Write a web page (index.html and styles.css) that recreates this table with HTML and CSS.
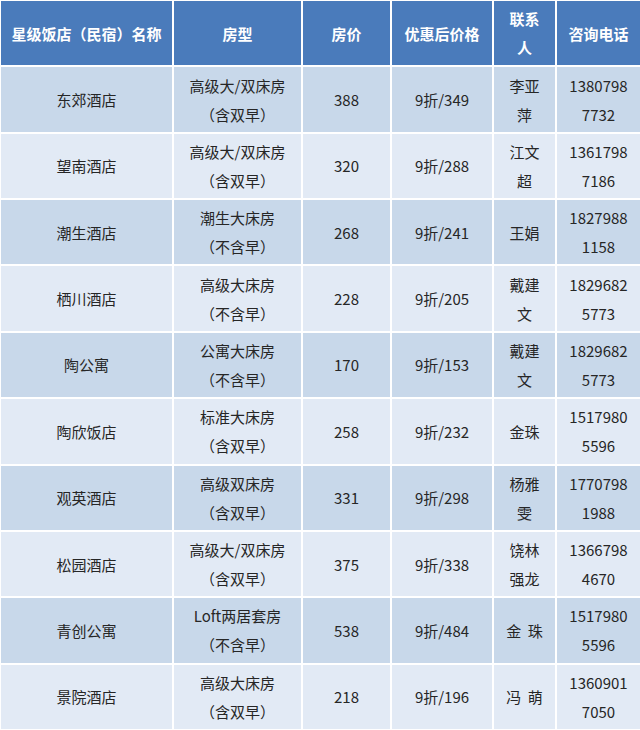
FILE: index.html
```html
<!DOCTYPE html>
<html lang="zh-CN">
<head>
<meta charset="utf-8">
<title>酒店优惠</title>
<link rel="stylesheet" href="styles.css">
</head>
<body>
<div class="table">
  <div class="th">星级饭店（民宿）名称</div>
  <div class="th">房型</div>
  <div class="th">房价</div>
  <div class="th">优惠后价格</div>
  <div class="th">联系<br>人</div>
  <div class="th">咨询电话</div>

  <div class="td odd">东郊酒店</div>
  <div class="td odd">高级大/双床房<br>（含双早）</div>
  <div class="td odd">388</div>
  <div class="td odd">9折/349</div>
  <div class="td odd">李亚<br>萍</div>
  <div class="td odd">1380798<br>7732</div>

  <div class="td even">望南酒店</div>
  <div class="td even">高级大/双床房<br>（含双早）</div>
  <div class="td even">320</div>
  <div class="td even">9折/288</div>
  <div class="td even">江文<br>超</div>
  <div class="td even">1361798<br>7186</div>

  <div class="td odd">潮生酒店</div>
  <div class="td odd">潮生大床房<br>（不含早）</div>
  <div class="td odd">268</div>
  <div class="td odd">9折/241</div>
  <div class="td odd">王娟</div>
  <div class="td odd">1827988<br>1158</div>

  <div class="td even">栖川酒店</div>
  <div class="td even">高级大床房<br>（不含早）</div>
  <div class="td even">228</div>
  <div class="td even">9折/205</div>
  <div class="td even">戴建<br>文</div>
  <div class="td even">1829682<br>5773</div>

  <div class="td odd">陶公寓</div>
  <div class="td odd">公寓大床房<br>（不含早）</div>
  <div class="td odd">170</div>
  <div class="td odd">9折/153</div>
  <div class="td odd">戴建<br>文</div>
  <div class="td odd">1829682<br>5773</div>

  <div class="td even">陶欣饭店</div>
  <div class="td even">标准大床房<br>（含双早）</div>
  <div class="td even">258</div>
  <div class="td even">9折/232</div>
  <div class="td even">金珠</div>
  <div class="td even">1517980<br>5596</div>

  <div class="td odd">观英酒店</div>
  <div class="td odd">高级双床房<br>（含双早）</div>
  <div class="td odd">331</div>
  <div class="td odd">9折/298</div>
  <div class="td odd">杨雅<br>雯</div>
  <div class="td odd">1770798<br>1988</div>

  <div class="td even">松园酒店</div>
  <div class="td even">高级大/双床房<br>（含双早）</div>
  <div class="td even">375</div>
  <div class="td even">9折/338</div>
  <div class="td even">饶林<br>强龙</div>
  <div class="td even">1366798<br>4670</div>

  <div class="td odd">青创公寓</div>
  <div class="td odd">Loft两居套房<br>（不含早）</div>
  <div class="td odd">538</div>
  <div class="td odd">9折/484</div>
  <div class="td odd">金&nbsp;&nbsp;珠</div>
  <div class="td odd">1517980<br>5596</div>

  <div class="td even">景院酒店</div>
  <div class="td even">高级大床房<br>（含双早）</div>
  <div class="td even">218</div>
  <div class="td even">9折/196</div>
  <div class="td even">冯&nbsp;&nbsp;萌</div>
  <div class="td even">1360901<br>7050</div>
</div>
</body>
</html>
```

FILE: styles.css
```css
html, body {
  margin: 0;
  padding: 0;
  background: #ffffff;
}

body {
  font-family: "Noto Sans CJK SC", "Noto Sans", sans-serif;
  font-size: 15px;
  color: #262626;
}

.table {
  display: grid;
  grid-template-columns: 171px 127px 87px 100px 61px 1fr;
  grid-auto-rows: 1fr;
  gap: 2px;
  padding: 1px 0 1px 1px;
  width: 640px;
  height: 730px;
  box-sizing: border-box;
  background: #ffffff;
}

.th, .td {
  display: flex;
  align-items: center;
  justify-content: center;
  text-align: center;
  line-height: 29px;
}

.th {
  background: #4a7bbb;
  color: #ffffff;
  font-weight: bold;
}

.odd {
  background: #c8d8ea;
}

.even {
  background: #e2eaf5;
}
```
